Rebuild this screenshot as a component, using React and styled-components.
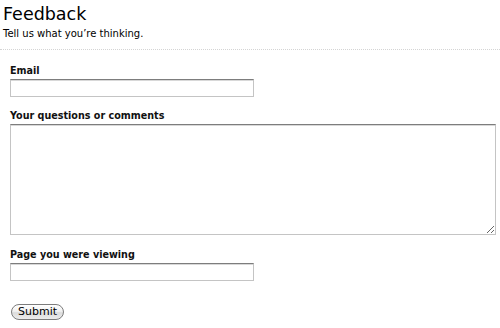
import React from 'react';
import styled, { createGlobalStyle } from 'styled-components';

const GlobalStyle = createGlobalStyle`
    html, body {
        margin: 0;
        padding: 0;
        background: #ffffff;
    }
    body {
        font-family: "DejaVu Sans", Verdana, sans-serif;
        color: #000000;
    }
`;

const Page = styled.div`
    width: 500px;
    height: 328px;
    overflow: hidden;
`;

const Header = styled.div`
    padding: 2px 0 8px 3px;
    border-bottom: 1px dotted #d4d4d4;
    .title {
        font-size: 17.5px;
        line-height: 24px;
        font-weight: 400;
        margin: 0;
    }
    .subtitle {
        font-size: 10px;
        line-height: 14px;
        margin: 1px 0 0;
    }
`;

const Form = styled.form`
    padding: 14px 0 0 10px;
    display: flex;
    flex-direction: column;
    align-items: flex-start;
`;

const Field = styled.div`
    display: flex;
    flex-direction: column;
    margin-bottom: ${p => p.$space || 12}px;
`;

const Label = styled.label`
    font-size: 9.6px;
    font-weight: 700;
    line-height: 13px;
    margin-bottom: 2px;
    color: #111;
`;

const inputLook = `
    box-sizing: border-box;
    border: 1px solid #c4c4c4;
    border-top: 1px solid #7d7d7d;
    box-shadow: inset 0 1px 0 #d8d8d8;
    background: #fff;
    font-family: "DejaVu Sans", sans-serif;
    font-size: 11px;
    margin: 0;
    outline: none;
`;

const TextInput = styled.input`
    ${inputLook}
    width: ${p => p.$width}px;
    height: 18px;
    padding: 1px 3px;
`;

const TextArea = styled.textarea`
    ${inputLook}
    width: 486px;
    height: 111px;
    padding: 2px;
    resize: both;
`;

const SubmitButton = styled.button`
    margin-top: 11px;
    margin-left: 1px;
    box-sizing: border-box;
    width: 53px;
    height: 16px;
    padding: 0;
    border: 1px solid #7c7c7c;
    border-radius: 8px;
    background: linear-gradient(#ffffff 0%, #f1f1f1 45%, #dcdcdc 55%, #ececec 100%);
    font-family: "DejaVu Sans", sans-serif;
    font-size: 11px;
    line-height: 14px;
    color: #000;
    cursor: pointer;
`;

const App = () => {
    return (
        <Page>
            <GlobalStyle />
            <Header>
                <h1 className="title">Feedback</h1>
                <p className="subtitle">Tell us what you’re thinking.</p>
            </Header>
            <Form onSubmit={e => e.preventDefault()}>
                <Field>
                    <Label htmlFor="email">Email</Label>
                    <TextInput id="email" type="text" $width={244} />
                </Field>
                <Field $space={13}>
                    <Label htmlFor="comments">Your questions or comments</Label>
                    <TextArea id="comments" />
                </Field>
                <Field>
                    <Label htmlFor="page">Page you were viewing</Label>
                    <TextInput id="page" type="text" $width={244} />
                </Field>
                <SubmitButton type="submit">Submit</SubmitButton>
            </Form>
        </Page>
    );
};

export default App;
